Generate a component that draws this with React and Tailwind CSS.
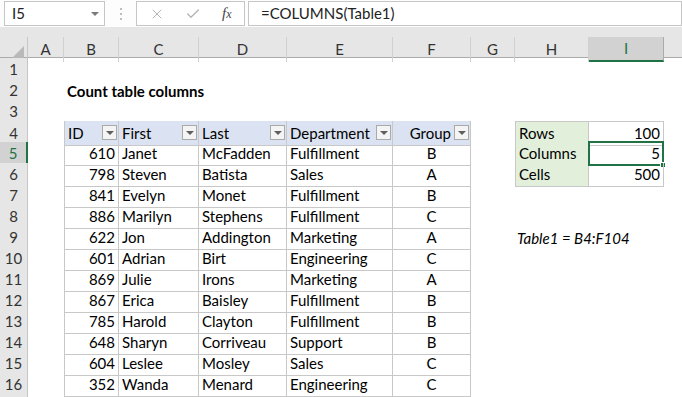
import { X, Check } from "lucide-react";

const grid =
  "grid grid-cols-[28px_36px_55px_80px_88px_106px_78px_44px_74px_75px_1fr] h-[21px]";

const rows = [
  [610, "Janet", "McFadden", "Fulfillment", "B"],
  [798, "Steven", "Batista", "Sales", "A"],
  [841, "Evelyn", "Monet", "Fulfillment", "B"],
  [886, "Marilyn", "Stephens", "Fulfillment", "C"],
  [622, "Jon", "Addington", "Marketing", "A"],
  [601, "Adrian", "Birt", "Engineering", "C"],
  [869, "Julie", "Irons", "Marketing", "A"],
  [867, "Erica", "Baisley", "Fulfillment", "B"],
  [785, "Harold", "Clayton", "Fulfillment", "B"],
  [648, "Sharyn", "Corriveau", "Support", "B"],
  [604, "Leslee", "Mosley", "Sales", "C"],
  [352, "Wanda", "Menard", "Engineering", "C"],
];

const cell = "flex items-center px-[3px] border-b border-r border-[#c8c8c8] whitespace-nowrap overflow-hidden";

const RowHead = ({ n, active }) =>
  active ? (
    <div className="flex items-center justify-center bg-[#d2d2d2] text-[#217346] border-b border-b-[#c6c6c6] border-r-2 border-r-[#217346]">
      {n}
    </div>
  ) : (
    <div className="flex items-center justify-center bg-[#e6e6e6] text-[#333] border-b border-r border-[#c6c6c6]">
      {n}
    </div>
  );

const DropBtn = () => (
  <div className="w-[15px] h-[15px] shrink-0 border border-[#a9a9a9] bg-[#f4f4f4] flex items-center justify-center">
    <div className="w-0 h-0 border-l-[4px] border-r-[4px] border-t-[4px] border-l-transparent border-r-transparent border-t-[#5f5f5f]" />
  </div>
);

const HeadCell = ({ label, right, first }) => (
  <div
    className={
      first
        ? "flex items-center justify-between pl-[3px] pr-[1px] bg-[#dbe3f2] border-l border-r border-b border-[#c8c8c8]"
        : right
        ? "flex items-center justify-end gap-[3px] pl-[3px] pr-[1px] bg-[#dbe3f2] border-r border-b border-[#c8c8c8]"
        : "flex items-center justify-between pl-[3px] pr-[1px] bg-[#dbe3f2] border-r border-b border-[#c8c8c8]"
    }
  >
    <span>{label}</span>
    <DropBtn />
  </div>
);

const sideRows = [
  ["Rows", "100"],
  ["Columns", "5"],
  ["Cells", "500"],
];

const SideCells = ({ i }) => {
  const [k, v] = sideRows[i];
  return (
    <>
      <div
        className={
          i === 0
            ? "flex items-center px-[3px] bg-[#e2efda] border-l border-t border-r border-b border-[#c8c8c8]"
            : "flex items-center px-[3px] bg-[#e2efda] border-l border-r border-b border-[#c8c8c8]"
        }
      >
        {k}
      </div>
      <div
        className={
          i === 0
            ? "relative flex items-center justify-end px-[3px] border-t border-r border-b border-[#c8c8c8]"
            : "relative flex items-center justify-end px-[3px] border-r border-b border-[#c8c8c8]"
        }
      >
        {v}
        {i === 1 && (
          <>
            <div className="absolute -left-[1px] -top-[1px] -right-[1px] bottom-[-1px] border-2 border-[#217346]" />
            <div className="absolute -right-[3px] -bottom-[3px] w-[6px] h-[6px] bg-[#217346] border border-white" />
          </>
        )}
      </div>
    </>
  );
};

export default function App() {
  return (
    <div className="w-[682px] h-[397px] overflow-hidden bg-white text-[15px] text-black font-['Lato',sans-serif]">
      {/* formula bar */}
      <div className="h-[27px] flex items-start pt-[1px] bg-[#fdfdfd]">
        <div className="ml-[4px] w-[101px] h-[25px] bg-white border border-[#c6c6c6] flex items-center justify-between pl-[7px] pr-[5px] text-[#222]">
          <span>I5</span>
          <div className="w-0 h-0 border-l-[4px] border-r-[4px] border-t-[4px] border-l-transparent border-r-transparent border-t-[#7a7a7a]" />
        </div>
        <div className="w-[31px] h-[25px] flex flex-col items-center justify-center gap-[3px]">
          <div className="w-[2px] h-[2px] bg-[#bdbdbd]" />
          <div className="w-[2px] h-[2px] bg-[#bdbdbd]" />
          <div className="w-[2px] h-[2px] bg-[#bdbdbd]" />
        </div>
        <div className="w-[109px] h-[25px] bg-white border border-[#c6c6c6] flex items-center pl-[12px]">
          <X size={16} strokeWidth={1.5} className="text-[#b4b4b4]" />
          <Check size={16} strokeWidth={2} className="ml-[20px] text-[#b4b4b4]" />
          <span className="ml-[21px] font-['Liberation_Serif',serif] italic text-[#444] text-[15px]">
            f<span className="text-[12px]">x</span>
          </span>
        </div>
        <div className="ml-[3px] flex-1 h-[25px] bg-white border border-[#c6c6c6] flex items-center pl-[12px] text-[#222]">
          =COLUMNS(Table1)
        </div>
      </div>
      <div className="h-[10px] bg-[#e6e6e6]" />

      {/* column headers */}
      <div className={grid + " bg-[#e6e6e6] text-[#333] border-b border-[#ababab]"}>
        <div className="flex items-end justify-end pr-[3px] pb-[3px] border-r border-[#c6c6c6]">
          <svg width="13" height="13" viewBox="0 0 13 13">
            <polygon points="13,0 13,13 0,13" fill="#b9b9b9" />
          </svg>
        </div>
        {["A", "B", "C", "D", "E", "F", "G", "H"].map((c) => (
          <div key={c} className="flex items-center justify-center border-r border-[#d0d0d0]">
            {c}
          </div>
        ))}
        <div className="flex items-center justify-center bg-[#d2d2d2] text-[#217346] border-r border-[#ababab] border-b-2 border-b-[#217346]">
          I
        </div>
        <div />
      </div>

      {/* row 1 */}
      <div className={grid}>
        <RowHead n={1} />
      </div>
      {/* row 2 */}
      <div className={grid}>
        <RowHead n={2} />
        <div />
        <div className="col-span-3 flex items-center pl-[3px] font-bold whitespace-nowrap">Count table columns</div>
      </div>
      {/* row 3 */}
      <div className={grid}>
        <RowHead n={3} />
      </div>
      {/* row 4 */}
      <div className={grid}>
        <RowHead n={4} />
        <div />
        <HeadCell label="ID" first />
        <HeadCell label="First" />
        <HeadCell label="Last" />
        <HeadCell label="Department" />
        <HeadCell label="Group" right />
        <div />
        <SideCells i={0} />
      </div>

      {rows.map((r, idx) => {
        const n = idx + 5;
        return (
          <div key={n} className={grid}>
            <RowHead n={n} active={n === 5} />
            <div />
            <div className={cell + " justify-end border-l"}>{r[0]}</div>
            <div className={cell}>{r[1]}</div>
            <div className={cell}>{r[2]}</div>
            <div className={cell}>{r[3]}</div>
            <div className={cell + " justify-center"}>{r[4]}</div>
            <div />
            {idx < 2 && <SideCells i={idx + 1} />}
            {n === 9 && (
              <div className="col-span-3 flex items-center pl-[2px] italic whitespace-nowrap">Table1 = B4:F104</div>
            )}
          </div>
        );
      })}

      {/* next row, only its top edge shows */}
      <div className={grid}>
        <div className="bg-[#e6e6e6] border-r border-[#c6c6c6]" />
        <div />
        <div className={cell + " border-l"} />
        <div className={cell} />
        <div className={cell} />
        <div className={cell} />
        <div className={cell} />
      </div>
    </div>
  );
}
